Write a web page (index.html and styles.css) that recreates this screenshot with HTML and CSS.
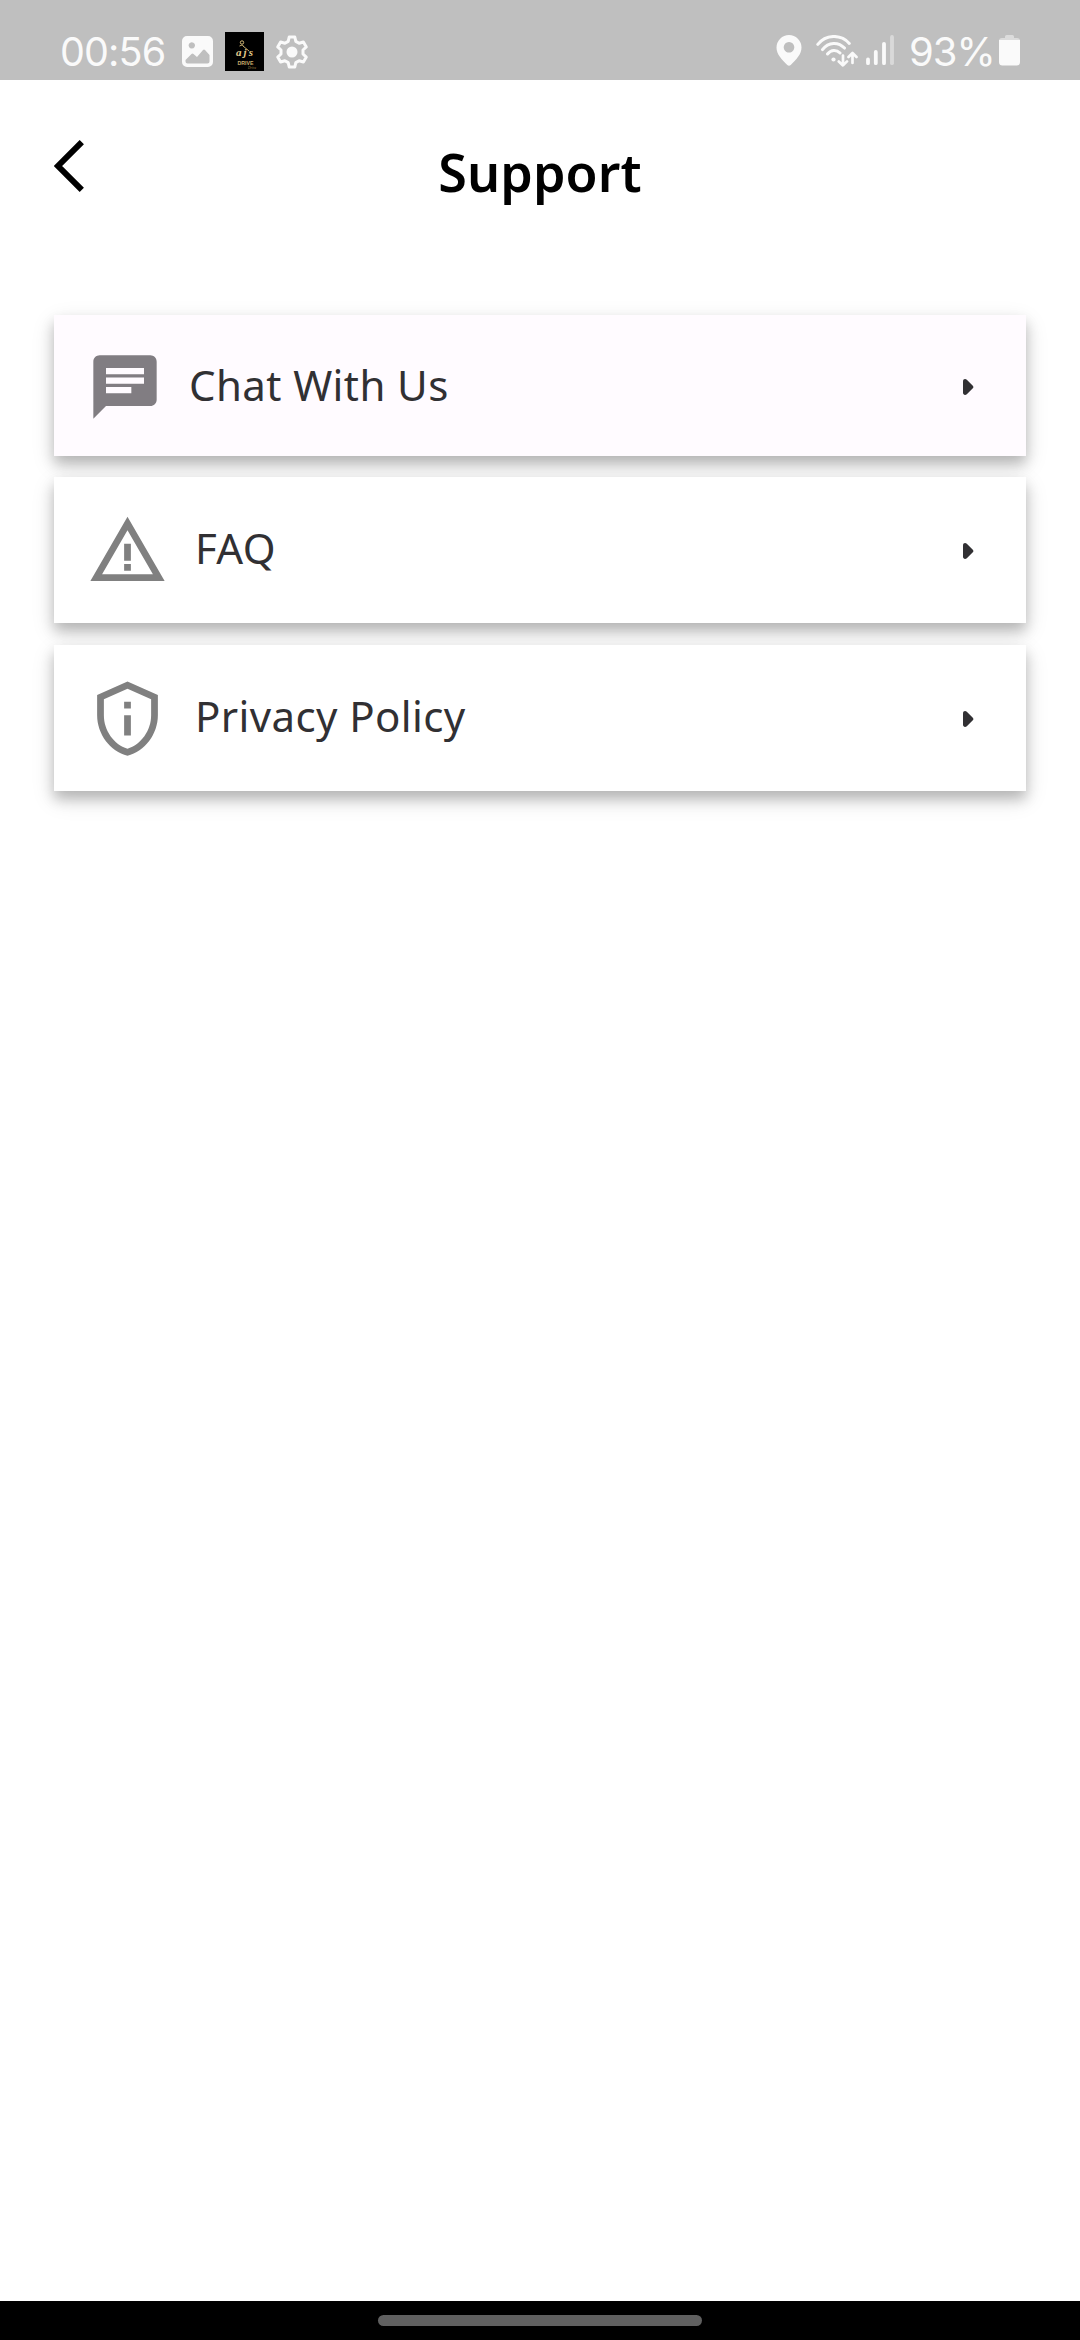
FILE: index.html
```html
<!DOCTYPE html>
<html lang="en">
<head>
<meta charset="utf-8">
<title>Support</title>
<link rel="stylesheet" href="styles.css">
</head>
<body>
<div class="screen">
  <div class="status-bar">
    <span class="clock">00:56</span>
    <svg class="s-image" width="31" height="31" viewBox="0 0 31 31"><path fill="currentColor" fill-rule="evenodd" d="M5 0h21a5 5 0 0 1 5 5v21a5 5 0 0 1-5 5H5a5 5 0 0 1-5-5V5a5 5 0 0 1 5-5zM9.800 6.200a3.200 3.200 0 1 0 .01 0zM3.500 24v1.500a2 2 0 0 0 2 2h20a2 2 0 0 0 2-2V19l-4.500-5q-1-1-2 0l-6 7-3.500-3q-1-.8-2 0z"/></svg>
    <svg class="s-app" width="39" height="39" viewBox="0 0 39 39">
      <rect width="39" height="39" fill="#000"/>
      <g fill="none" stroke="#d8bd7a"><circle cx="17" cy="10.500" r="1.700"/><path d="M14.500 14q3-2 4 0M18 14l6 5" stroke-width=".9"/></g>
      <text x="11" y="24" class="logo-script" textLength="17">ajs</text>
      <text x="12.500" y="33" class="logo-name" textLength="16" lengthAdjust="spacingAndGlyphs">DRIVE</text>
      <text x="23" y="37" class="logo-sub" textLength="8" lengthAdjust="spacingAndGlyphs">Drive</text>
    </svg>
    <svg class="s-gear" width="34" height="34" viewBox="0 0 34 34"><path fill="none" stroke="currentColor" stroke-width="3" stroke-linejoin="round" d="M14.200 2h5.600l1 4.400 3.300 1.900 4.300-1.300 2.900 4.900-3.300 3.100v4l3.300 3.100-2.900 4.900-4.300-1.300-3.300 1.900-1 4.400h-5.600l-1-4.400-3.300-1.900L5.600 27l-2.900-4.900L6 19v-4l-3.300-3.100L5.600 7l4.300 1.300 3.300-1.900z"/><circle cx="17" cy="17" r="5.500" fill="currentColor"/></svg>
    <span class="spacer"></span>
    <svg class="s-pin" width="26" height="31" viewBox="0 0 26 31"><path fill="currentColor" fill-rule="evenodd" d="M13 0a12.500 12.500 0 0 1 12.500 12.500c0 7-5.500 12-10.800 17.500q-1.700 1.600-3.400 0C6 24.500.5 19.500.5 12.500A12.500 12.500 0 0 1 13 0zm0 7a5.300 5.300 0 1 0 .01 0z"/></svg>
    <svg class="s-wifi" width="42" height="32" viewBox="0 0 42 32" fill="none" stroke="currentColor" stroke-width="3" stroke-linecap="round" stroke-linejoin="round"><path d="M1.800 9.400C10 -1 25-1 33.300 8.400M6.500 14.600c6-8 16-8 22-1.500M11.500 19c3.500-4.500 9-4.500 12.500-1"/><circle cx="17.500" cy="24.500" r="2.100" fill="currentColor" stroke="none"/><path stroke-width="2.700" d="M27 20.500v9.700m-4.200-3.800 4.200 4 4-4M36.500 28V18m-4 4 4-4 4 4"/></svg>
    <svg class="s-signal" width="28" height="31" viewBox="0 0 28 31" stroke="currentColor" stroke-width="3.800" stroke-linecap="round"><path d="M2 24.500v3.700M9.800 17v11.200M18 8.800v19.400"/><path opacity=".45" d="M26 2v26.200"/></svg>
    <span class="battery-level">93%</span>
    <svg class="s-battery" width="21" height="31" viewBox="0 0 21 31"><path fill="currentColor" opacity=".5" d="M7.500 0h6a1.500 1.500 0 0 1 1.500 1.500V3h3a3 3 0 0 1 3 3H0a3 3 0 0 1 3-3h3V1.500A1.500 1.500 0 0 1 7.500 0z"/><path fill="currentColor" d="M0 5h21v22a3.500 3.500 0 0 1-3.500 3.500h-14A3.500 3.500 0 0 1 0 27z"/></svg>
  </div>

  <header class="app-bar">
    <svg class="back" width="32" height="52" viewBox="0 0 32 52"><path d="M27.800 2.200 4 26l23.800 23.800" fill="none" stroke="#000" stroke-width="6"/></svg>
    <h1 class="title">Support</h1>
  </header>

  <main class="menu">
    <a class="card card-chat">
      <svg class="card-icon" width="76" height="76" viewBox="0 0 24 24"><path fill="#817d82" d="M4 2h16c1.100 0 2 .9 2 2v12c0 1.100-.9 2-2 2H6l-4 4V4c0-1.100.9-2 2-2z"/><path fill="#fffbff" d="M6 6h12v2H6zM6 9h12v2H6zM6 12h8v2H6z"/></svg>
      <span class="label">Chat With Us</span>
      <svg class="arrow" width="11" height="16" viewBox="0 0 11 16"><path d="M0 2.200C0 .2 2.200-.6 3.800.8l6 5.900q1.200 1.300 0 2.600l-6 5.900C2.200 16.600 0 15.800 0 13.800z"/></svg>
    </a>
    <a class="card">
      <svg class="card-icon" width="81" height="81" viewBox="0 0 24 24"><path fill="#808080" d="M12 5.990 19.530 19H4.470L12 5.990M12 2 1 21h22L12 2zm1 14h-2v2h2v-2zm0-6h-2v5h2v-5z"/></svg>
      <span class="label">FAQ</span>
      <svg class="arrow" width="11" height="16" viewBox="0 0 11 16"><path d="M0 2.200C0 .2 2.200-.6 3.800.8l6 5.900q1.200 1.300 0 2.600l-6 5.900C2.200 16.600 0 15.800 0 13.800z"/></svg>
    </a>
    <a class="card">
      <svg class="card-icon" width="81" height="81" viewBox="0 0 24 24"><path fill="#808080" d="M12 1 3 5v6c0 5.550 3.840 10.740 9 12 5.160-1.260 9-6.450 9-12V5l-9-4zm7 10c0 4.520-2.980 8.690-7 9.930-4.020-1.240-7-5.410-7-9.930V6.300l7-3.110 7 3.110V11zm-8 0h2v6h-2v-6zm0-4h2v2h-2V7z"/></svg>
      <span class="label">Privacy Policy</span>
      <svg class="arrow" width="11" height="16" viewBox="0 0 11 16"><path d="M0 2.200C0 .2 2.200-.6 3.800.8l6 5.900q1.200 1.300 0 2.600l-6 5.900C2.200 16.600 0 15.800 0 13.800z"/></svg>
    </a>
  </main>

  <div class="nav-bar"><div class="handle"></div></div>
</div>
</body>
</html>
```
FILE: styles.css
```css
* { box-sizing: border-box; }
body { margin: 0; background: #fff; font-family: "Noto Sans", sans-serif; }
.screen { width: 1080px; height: 2340px; display: flex; flex-direction: column; background: #fff; overflow: hidden; }
svg { display: block; flex: none; }

.status-bar { height: 80px; flex: none; display: flex; align-items: center; padding: 24px 60px 0 60px; background: #bfbfbf; color: #fafafa; font-family: Inter, sans-serif; font-size: 40px; line-height: 56px; }
.clock { width: 122px; margin-top: -1px; font-size: 39.500px; letter-spacing: -0.900px; }
.s-image { margin-top: -1px; }
.s-app { margin-left: 12px; margin-top: -1px; }
.s-gear { margin-left: 11px; margin-top: -1px; }
.spacer { flex: 1; }
.s-pin, .s-wifi, .s-signal, .s-battery { margin-top: -3px; }
.s-wifi { margin-left: 14px; }
.s-signal { margin-left: 8px; }
.battery-level { margin-left: 15px; margin-top: -1px; width: 90px; letter-spacing: -1px; white-space: nowrap; }
.logo-script { font: italic 700 11px "Liberation Serif", serif; fill: #e3cb8d; }
.logo-name { font: 700 6px "Liberation Sans", sans-serif; fill: #c9ae6d; }
.logo-sub { font: italic 4px "Liberation Serif", serif; fill: #a38447; }

.app-bar { height: 235px; flex: none; display: grid; grid-template-columns: 100px 1fr 100px; padding: 0 54px; }
.back { margin-top: 60px; }
.title { margin: 56px 0 0; font-size: 52px; line-height: 72px; font-weight: 600; letter-spacing: 0.100px; text-align: center; color: #000; }

.menu { flex: 1; display: flex; flex-direction: column; gap: 22px; padding: 0 54px; }
.card { height: 146px; flex: none; display: flex; align-items: center; padding: 0 52px 0 33px; background: #fff; color: #313033; box-shadow: 0 8px 12px rgba(0,0,0,.2), 0 8px 22px rgba(0,0,0,.14); }
.card-chat { height: 141px; margin-bottom: -1px; background: #fffbff; }
.card-chat .card-icon { margin-top: 3px; }
.label { flex: 1; margin: -5px 0 0 27px; font-size: 42px; line-height: 56px; letter-spacing: 0.400px; }
.card-chat .label { margin-top: -2px; margin-left: 26px; }
.arrow { fill: #313033; margin-top: 2px; }

.nav-bar { height: 39px; flex: none; display: flex; justify-content: center; padding-top: 14px; background: #000; }
.handle { width: 324px; height: 11px; border-radius: 6px; background: #606060; }
```
